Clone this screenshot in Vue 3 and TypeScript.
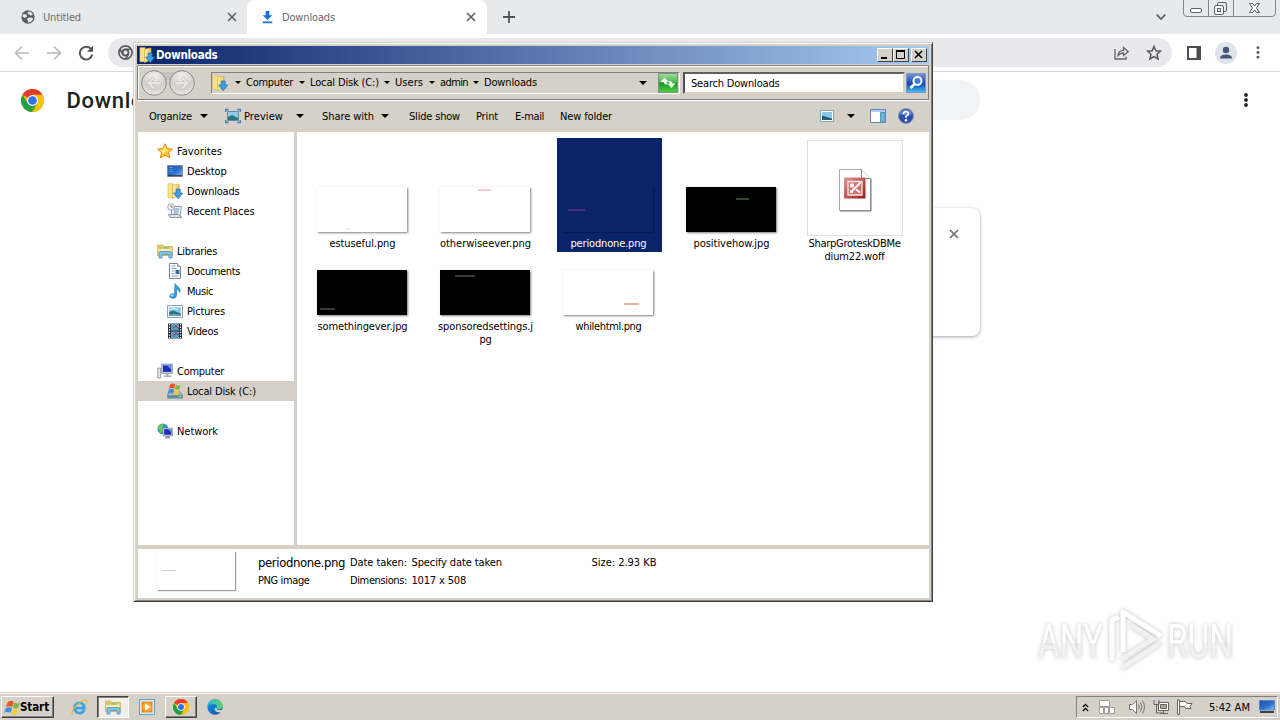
<script setup lang="ts">
interface Row { icon: string; text: string; w: number; child?: boolean; sel?: boolean; gap?: boolean }
interface FileItem { lines: { t: string; w: number }[]; kind: 'light' | 'dark' | 'doc'; mark?: string; sel?: boolean }

/* Spreads letters so that a label occupies the given pixel width. */
const vFit = {
  mounted(el: HTMLElement, binding: { value: number }) {
    const n = (el.textContent || '').trim().length
    const natural = el.getBoundingClientRect().width
    if (n > 0) el.style.letterSpacing = ((binding.value - natural) / n).toFixed(3) + 'px'
  }
}

const crumbs = [
  { text: 'Computer', w: 47, slot: 56 },
  { text: 'Local Disk (C:)', w: 69, slot: 77 },
  { text: 'Users', w: 28, slot: 37 },
  { text: 'admin', w: 28, slot: 36 },
  { text: 'Downloads', w: 53, slot: 0 }
]

const rows: Row[] = [
  { icon: 'star', text: 'Favorites', w: 45 },
  { icon: 'desktop', text: 'Desktop', w: 39.5, child: true },
  { icon: 'dlfolder', text: 'Downloads', w: 52.5, child: true },
  { icon: 'recent', text: 'Recent Places', w: 67.5, child: true },
  { icon: '', text: '', w: 0, gap: true },
  { icon: 'library', text: 'Libraries', w: 40 },
  { icon: 'document', text: 'Documents', w: 53, child: true },
  { icon: 'music', text: 'Music', w: 26, child: true },
  { icon: 'picture', text: 'Pictures', w: 38, child: true },
  { icon: 'video', text: 'Videos', w: 31, child: true },
  { icon: '', text: '', w: 0, gap: true },
  { icon: 'computer', text: 'Computer', w: 47 },
  { icon: 'disk', text: 'Local Disk (C:)', w: 69, child: true, sel: true },
  { icon: '', text: '', w: 0, gap: true },
  { icon: 'network', text: 'Network', w: 41 }
]

const files: FileItem[] = [
  { lines: [{ t: 'estuseful.png', w: 66 }], kind: 'light', mark: 'm1' },
  { lines: [{ t: 'otherwiseever.png', w: 91 }], kind: 'light', mark: 'm2' },
  { lines: [{ t: 'periodnone.png', w: 76 }], kind: 'light', mark: 'm3', sel: true },
  { lines: [{ t: 'positivehow.jpg', w: 76 }], kind: 'dark', mark: 'm4' },
  { lines: [{ t: 'SharpGroteskDBMe', w: 92 }, { t: 'dium22.woff', w: 60 }], kind: 'doc' },
  { lines: [{ t: 'somethingever.jpg', w: 90 }], kind: 'dark', mark: 'm5' },
  { lines: [{ t: 'sponsoredsettings.j', w: 95 }, { t: 'pg', w: 12 }], kind: 'dark', mark: 'm6' },
  { lines: [{ t: 'whilehtml.png', w: 66 }], kind: 'light', mark: 'm7' }
]
</script>

<template>
  <div class="screen">
    <svg class="defs" width="0" height="0">
      <defs>
        <linearGradient id="gFolder" x1="0" x2="1"><stop offset="0" stop-color="#fff3b0" /><stop offset="1" stop-color="#e8c25a" /></linearGradient>
        <linearGradient id="gBlue" x1="0" y1="0" x2="1" y2="1"><stop offset="0" stop-color="#1f4fb0" /><stop offset=".55" stop-color="#2e6fd0" /><stop offset="1" stop-color="#8dbdee" /></linearGradient>
        <linearGradient id="gRed" x1="0" y1="0" x2="1" y2="1"><stop offset="0" stop-color="#dc9a98" /><stop offset="1" stop-color="#9c1717" /></linearGradient>
        <linearGradient id="gEdge" x1="0" y1="0" x2="1" y2="1"><stop offset="0" stop-color="#1b9de2" /><stop offset="1" stop-color="#0c4fa5" /></linearGradient>
        <linearGradient id="gEdge2" x1="0" x2="1"><stop offset="0" stop-color="#2bb3e0" /><stop offset="1" stop-color="#5fd46a" /></linearGradient>
        <radialGradient id="gBall" cx=".5" cy=".25" r=".8"><stop offset="0" stop-color="#f4f2ee" /><stop offset=".6" stop-color="#d2cfc9" /><stop offset="1" stop-color="#f3f1ec" /></radialGradient>
        <linearGradient id="gGo" x1="0" y1="0" x2="0" y2="1"><stop offset="0" stop-color="#a2dc9c" /><stop offset=".45" stop-color="#4fbb4f" /><stop offset=".5" stop-color="#149a1e" /><stop offset="1" stop-color="#52cf4c" /></linearGradient>
        <linearGradient id="gMag" x1="0" y1="0" x2="0" y2="1"><stop offset="0" stop-color="#7796d6" /><stop offset=".45" stop-color="#2353bb" /><stop offset=".55" stop-color="#1646b4" /><stop offset="1" stop-color="#43c4f6" /></linearGradient>
      </defs>
      <symbol id="star" viewBox="0 0 16 16"><path d="M8 .8 10.2 5.6 15.5 6.1 11.5 9.6 12.8 15 8 12.2 3.4 15 4.5 9.7.6 6.1 5.8 5.6Z" fill="#ffc933" stroke="#e58a1c" /><path d="M8 3 9.4 6.5 12 7 9 8 5 12 5.8 9 3 7 6.5 6.5Z" fill="#ffe98a" /></symbol>
      <symbol id="desktop" viewBox="0 0 16 16"><path d="M.5 2.5h15v11H.5z" fill="url(#gBlue)" stroke="#7d8ea8" /><path d="M2 4.5h4M2 6.5h3M2 8.5h4" stroke="#5a90dd" /><path d="M1 12.7h14" stroke="#28303e" /></symbol>
      <symbol id="dlfolder" viewBox="0 0 16 16"><path d="M1 .7h5v14H1z" fill="#f7e287" stroke="#dfc163" stroke-width=".7" /><path d="M5.500 2.2 12 1v11.500L5.500 15.600Z" fill="url(#gFolder)" stroke="#d3ac49" stroke-width=".7" /><path d="M9.200 6h4v4h2.600L11.200 15.700 6.600 10h2.600Z" fill="#3f9fe0" stroke="#1c6bb4" stroke-width=".7" /></symbol>
      <symbol id="recent" viewBox="0 0 16 16"><path d="M5 3.5h9.500l-1.500 10H4z" fill="#f2f5f8" stroke="#8796a8" /><path d="M7 6h5M6.800 8h5M6.500 10h5" stroke="#5d8fc4" /><path d="M1.500 11.500h10l3.500 3H3z" fill="#dce2e8" stroke="#8796a8" /><circle cx="4" cy="4" r="3.300" fill="#f7f9fa" stroke="#9ca6b0" /><path d="M4 2v2h2" fill="none" stroke="#567" stroke-width=".8" /></symbol>
      <symbol id="library" viewBox="0 0 16 16"><path d="M.6 3.500V2h5l1 1.500h8.800v9H.6z" fill="#e9ce67" stroke="#cfae50" stroke-width=".8" /><path d="M1.500 5.500h13v6h-13z" fill="#fbefad" /><path d="M2 5h3M6 5h6" stroke="#6bb978" /><path d="M2.500 8.500h11q1.500 0 1.500 2V15h-3v-3.500H5V15H2V10z" fill="#7fc3e8" stroke="#4a94c7" stroke-width=".8" /></symbol>
      <symbol id="document" viewBox="0 0 16 16"><path d="M2.500.5h8l3 3v12h-11z" fill="#fff" stroke="#71859c" /><path d="M10.500.5v3h3" fill="#d9e4ef" stroke="#71859c" stroke-width=".8" /><path d="M4.500 3h4M4.500 5.500h5M4.500 13h7M4.500 8h3M4.500 10.500h3" stroke="#779bd1" /><path d="M8.500 7h4v4h-4z" fill="#426a9d" /></symbol>
      <symbol id="music" viewBox="0 0 16 16"><path d="M8 .5C10 4 14 4 13 9.500 12 7 10 6.500 9.500 6.200v6.500Q9 15.500 5 15.300 1.500 14.500 3 11.800 5 10 7.500 11Z" fill="#35a0df" stroke="#1a75bb" stroke-width=".6" /><ellipse cx="5" cy="12.500" rx="1.700" ry="1.100" fill="#9bdcff" /></symbol>
      <symbol id="picture" viewBox="0 0 16 16"><path d="M.5 2.500h15v12H.5z" fill="#fff" stroke="#8aa0b4" /><path d="M2.200 4.200h11.600v8.600H2.200z" fill="#83c8ea" /><path d="M2.200 9 6 7.500l7.800 3v2.300H2.200z" fill="#2d6f86" /><path d="M2.200 11.500 8 11l5.800 1v.8H2.200z" fill="#6ab0c4" /><path d="M3 6.500Q7 4 11 6.500" stroke="#eefaff" fill="none" /></symbol>
      <symbol id="video" viewBox="0 0 16 16"><path d="M1 .5h14v15H1z" fill="#22303a" /><path d="M4 1h8v6.500H4zM4 8.500h8V15H4z" fill="#5a9cc4" /><path d="m6 5 3-2 3 3M6 13l3-3 3 2" stroke="#94505a" stroke-width="1.300" fill="none" /><path d="M2.500 1v14M13.500 1v14" stroke="#fff" stroke-width="1.200" stroke-dasharray="1.300 1.300" /></symbol>
      <symbol id="computer" viewBox="0 0 16 16"><path d="M.7 5h2.800v10H.7z" fill="#dfe2e6" stroke="#8a929c" stroke-width=".8" /><path d="M4.500 1h11v9.500h-11z" fill="#b9c2d3" stroke="#7e889b" stroke-width=".6" /><path d="M6 2.400h8.200v6.500H6z" fill="#1c2fb8" /><path d="M10 2.400h4.200v4z" fill="#6d8df0" /><path d="M9 10.500h2.500v2H14v1.600H7v-1.600h2z" fill="#a6afbd" /></symbol>
      <symbol id="disk" viewBox="0 0 16 16"><path d="M2.500 8.500h10l3 3v3.700H.6v-3.700z" fill="#a7b4bd" stroke="#6c7a84" stroke-width=".7" /><path d="M1 12.300h14v2.400H1z" fill="#4d8f9c" /><path d="M12 13.500h2" stroke="#8df16b" /><g transform="translate(.8 0) scale(.75)"><path d="M3 2q4-3 7 0L8.600 7.500q-3-2-7 0z" fill="#e8572a" /><path d="M11 2.500q3 2 6 0L15.400 8q-3 2-6 0z" fill="#7bb93c" /><path d="M1.300 8.800q4-2 7 0L6.800 14q-3-2-7 0z" fill="#3d8fdc" /><path d="M9 9.300q3 2 6 0L13.500 15q-3 2-6 0z" fill="#fac92c" /></g></symbol>
      <symbol id="network" viewBox="0 0 16 16"><circle cx="5.800" cy="5.800" r="5.400" fill="#2f91cf" /><path d="M2 2.500Q5 0 7 1.500L5 5 6.500 7 4 10.500 2.500 7 .6 6z" fill="#6cc464" /><path d="M6 5h9.700v8H6z" fill="#c4ccda" stroke="#7b879b" stroke-width=".6" /><path d="M7.200 6.200h7.200v5.500H7.200z" fill="#1c2fb8" /><path d="M11 6.200h3.400v3.600z" fill="#6d8df0" /><path d="M9 13h4v2.400H8z" fill="#8f99a8" /></symbol>
      <symbol id="chrome" viewBox="0 0 24 24"><circle cx="12" cy="12" r="12" fill="#fbbf12" /><path d="M12 12 1.600 6A12 12 0 0 1 22.400 6z" fill="#e33b2e" /><path d="M1.600 6 7.200 15l4.800 2 0 7A12 12 0 0 1 1.600 6Z" fill="#23a047" /><path d="M12 24 16.500 16 12 16Z" fill="#23a047" /><path d="M17.200 15 12 24A12 12 0 0 0 22.400 6H12z" fill="#fbbf12" /><circle cx="12" cy="12" r="5.700" fill="#fff" /><circle cx="12" cy="12" r="4.500" fill="#2a75e8" /></symbol>
      <symbol id="winflag" viewBox="0 0 18 16"><path d="M4 2q4-3 7 0L9.400 7.500q-3-2-7 0z" fill="#e8572a" /><path d="M11.800 2.500q3 2 6 0L16.200 8q-3 2-6 0z" fill="#7bb93c" /><path d="M2 8.600q4-2 7 0L7.500 14q-3-2-7 0z" fill="#3d8fdc" /><path d="M9.800 9.100q3 2 6 0L14.300 15q-3 2-6 0z" fill="#fac92c" /></symbol>
      <symbol id="cross" viewBox="0 0 10 10"><path d="m1 1 8 8M9 1 1 9" stroke="currentColor" stroke-width="1.700" fill="none" /></symbol>
      <symbol id="caret" viewBox="0 0 8 4"><path d="M0 0h8L4 4z" fill="#000" /></symbol>
    </svg>

    <div class="browser">
      <div class="tabs">
        <div class="tab">
          <svg class="globe" viewBox="0 0 16 16"><circle cx="8" cy="8" r="7.600" fill="#5a5e63" /><path d="M3 4.500 6 5l1 2.500L4.500 9 1.600 7.500Q1.600 6 3 4.500ZM8 2h3l2.600 3L11 6.500 10 5 7.600 4.600ZM8.500 8.800 12 8.500l2 1.200Q12.500 14 8 14.300V12L6.500 10.600Z" fill="#e7eaed" /></svg>
          <span v-fit="38">Untitled</span>
          <svg class="tab-x"><use href="#cross" /></svg>
        </div>
        <div class="tab active">
          <svg class="dl" viewBox="0 0 12 14"><path d="M4 0h4v4.600h3.200L6 9.800.8 4.600H4zM.8 11.400h10.400v1.900H.8z" fill="#1a6fd6" /></svg>
          <span v-fit="53">Downloads</span>
          <svg class="tab-x"><use href="#cross" /></svg>
        </div>
        <svg class="plus" viewBox="0 0 12 12"><path d="M6 0v12M0 6h12" stroke="#4f5357" stroke-width="1.800" /></svg>
        <svg class="chev" viewBox="0 0 10 6"><path d="m.7.7 4.300 4.300L9.300.7" fill="none" stroke="#5a5e63" stroke-width="1.700" /></svg>
        <svg class="winbtns" viewBox="0 0 93 17" fill="none" stroke="#80868b"><path d="M.5 0v13q0 3.500 3.500 3.500h85q3.500 0 3.500-3.500V0M25.500 0v16M50.500 0v16" /><g stroke="#5f646a"><rect x="7.500" y="8.500" width="11" height="4" rx="1.500" fill="#fff" /><path d="M34.500 5V4q0-1.500 1.500-1.500h6q1.500 0 1.500 1.500v6q0 1.500-1.500 1.500h-1" /><rect x="31.500" y="5.500" width="9" height="9" rx="1.500" fill="#f6f7f8" /><rect x="34.500" y="8.500" width="3" height="3" /><path d="M66.500 3.500h3l2 2.500 2-2.500h3L73.500 8l3 4.500h-3l-2-2.500-2 2.500h-3l3-4.500z" fill="#fff" /></g></svg>
      </div>

      <div class="toolbar">
        <svg class="nav" viewBox="0 0 16 16"><path d="M15 8H2M8 1.500 1.500 8 8 14.500" fill="none" stroke="#b9bbbe" stroke-width="1.700" /></svg>
        <svg class="nav" viewBox="0 0 16 16"><path d="M1 8h13M8 1.500 14.500 8 8 14.500" fill="none" stroke="#b9bbbe" stroke-width="1.700" /></svg>
        <svg class="nav" viewBox="0 0 16 16"><path d="M13.300 4.500A6.300 6.300 0 1 0 14.300 9.500" fill="none" stroke="#54585d" stroke-width="2" /><path d="M15 .8v6H9z" fill="#54585d" /></svg>
        <div class="omnibox">
          <svg class="mono" viewBox="0 0 16 16"><circle cx="8" cy="8" r="7" fill="none" stroke="#5a5e63" stroke-width="1.800" /><circle cx="8" cy="8" r="3.200" fill="none" stroke="#5a5e63" stroke-width="2" /><path d="M8 4.500h6.500M5 9.700 1.800 4M11 10 8 15" stroke="#5a5e63" stroke-width="1.800" /></svg>
          <svg class="share" viewBox="0 0 15 14" fill="none" stroke="#62666b" stroke-width="1.300"><path d="M1 3v10h11V10.500" /><path d="M4 9.500Q4.500 4.500 9.500 4.300V1.500L14.200 5.700 9.500 9.500V7Q6.500 6.800 4 9.500Z" /></svg>
          <svg class="fav" viewBox="0 0 16 16"><path d="m8 1.500 1.900 4.300 4.600.4-3.500 3.100 1.100 4.600L8 11.500l-4.100 2.400L5 9.300 1.500 6.200l4.600-.4z" fill="none" stroke="#54585d" stroke-width="1.500" /></svg>
        </div>
        <svg class="side" viewBox="0 0 14 14"><path d="M1 1h12v12H1z" fill="#fff" stroke="#4c5055" stroke-width="2" /><path d="M9.500 1H13v12H9.500z" fill="#4c5055" /></svg>
        <svg class="avatar" viewBox="0 0 22 22"><circle cx="11" cy="11" r="11" fill="#dfe3eb" /><circle cx="11" cy="8" r="3.200" fill="#46547a" /><path d="M5 16.500Q5 12.500 11 12.500t6 4z" fill="#46547a" /></svg>
        <svg class="dots" viewBox="0 0 4 14" fill="#5a5e63"><circle cx="2" cy="2" r="1.600" /><circle cx="2" cy="7" r="1.600" /><circle cx="2" cy="12" r="1.600" /></svg>
      </div>

      <div class="page-head">
        <svg class="logo"><use href="#chrome" /></svg>
        <h1>Downloads</h1>
        <div class="search-pill"></div>
        <svg class="menu-dots" viewBox="0 0 4 14" fill="#202124"><circle cx="2" cy="2" r="1.900" /><circle cx="2" cy="7" r="1.900" /><circle cx="2" cy="12" r="1.900" /></svg>
      </div>
      <div class="dl-card"><svg><use href="#cross" /></svg></div>
    </div>

    <div class="window">
      <div class="titlebar">
        <svg class="i16"><use href="#dlfolder" /></svg>
        <b v-fit="61.5">Downloads</b>
        <div class="tbtns">
          <i><svg viewBox="0 0 14 12"><path d="M3 9h6" stroke="#000" stroke-width="2" /></svg></i>
          <i><svg viewBox="0 0 14 12"><path d="M2.500 2h8v7.500h-8z" fill="none" stroke="#000" /><path d="M2 2h9" stroke="#000" stroke-width="2" /></svg></i>
          <i class="gapl"><svg viewBox="0 0 14 12"><path d="m3 2 7 7M10 2 3 9" stroke="#000" stroke-width="1.600" /></svg></i>
        </div>
      </div>

      <div class="navbar">
        <svg class="balls" viewBox="0 0 56 28"><path d="M10 3h36v10q-18-4-36 0z" fill="#c5c2bc" /><g stroke="#8f8c87"><circle cx="14" cy="14" r="12.300" fill="url(#gBall)" /><circle cx="42" cy="14" r="12.300" fill="url(#gBall)" /></g><g fill="none" stroke="#c3c0ba" stroke-width="3.200"><path d="M20 14H9M14 8.500 8.500 14l5.500 5.500M36 14h11M42 8.500 47.500 14 42 19.500" /></g><g fill="none" stroke="#e9e7e3" stroke-width="1.900"><path d="M20 14H9M14 8.500 8.500 14l5.500 5.500M36 14h11M42 8.500 47.500 14 42 19.500" /></g></svg>
        <div class="address">
          <svg class="i16"><use href="#dlfolder" /></svg>
          <svg class="tri first" viewBox="0 0 8 4"><path d="M1 0h6L4 3z" /></svg>
          <div v-for="(c, i) in crumbs" :key="c.text" class="crumb" :style="{ width: (c.slot + 8) + 'px' }">
            <span v-fit="c.w">{{ c.text }}</span>
            <svg v-if="i < crumbs.length - 1" class="tri" viewBox="0 0 8 4"><path d="M1 0h6L4 3z" /></svg>
          </div>
          <svg class="caret"><use href="#caret" /></svg>
          <svg class="go" viewBox="0 0 20 20"><path d="M.5.5h19v19H.5z" fill="url(#gGo)" stroke="#7b927c" /><path d="M2.500 9 6.500 4.500 10.500 9H8.300q.5 2 2.500 2.500-4.500.5-5.300-2.500zM17.500 10.500 13.500 15 9.500 10.500h2.300Q11.500 8.500 9.500 8q4.300-.5 5.300 2.500z" fill="#fff" /></svg>
        </div>
        <div class="search"><span v-fit="88.5">Search Downloads</span></div>
        <svg class="mag" viewBox="0 0 20 20"><path d="M.5.5h19v19H.5z" fill="url(#gMag)" stroke="#7f96bb" /><circle cx="11.500" cy="8" r="4" fill="#3f7fd8" stroke="#fff" stroke-width="2" /><path d="M8.500 11 4.500 15" stroke="#fff" stroke-width="2.600" /></svg>
      </div>

      <div class="commands">
        <span v-fit="43">Organize</span><svg class="caret c1"><use href="#caret" /></svg>
        <svg class="pv" viewBox="0 0 16 16"><path d="M2.500 3.500h11v9h-11z" fill="#8ecbe9" stroke="#6b86a0" /><path d="M3 9l4-2 6 3v2H3z" fill="#2d7483" /><path d="M.7 4V1.500h3M12.300 1.500h3V4M15.300 12v2.500h-3M3.700 14.500h-3V12" fill="none" stroke="#3f7cc4" stroke-width="1.300" /></svg>
        <span v-fit="39">Preview</span><svg class="caret c2"><use href="#caret" /></svg>
        <span class="s3" v-fit="52">Share with</span><svg class="caret c3"><use href="#caret" /></svg>
        <span class="s4" v-fit="51">Slide show</span>
        <span class="s5" v-fit="22">Print</span>
        <span class="s6" v-fit="29">E-mail</span>
        <span class="s7" v-fit="52">New folder</span>
        <div class="cmdright">
          <svg class="view" viewBox="0 0 14 12"><path d="M.5.500h13v11H.5z" fill="#fff" stroke="#87a0b5" /><path d="M2 2h10v8H2z" fill="#8ac5ea" /><path d="m2 5.500 10 3V10H2z" fill="#275f75" /></svg>
          <svg class="caret"><use href="#caret" /></svg>
          <svg class="pane" viewBox="0 0 16 14"><path d="M.5.500h15v13H.5z" fill="#fff" stroke="#6389b8" /><path d="M1 1h14v2H1z" fill="#b5cee9" /><path d="M10.500 3.500h4.500V13h-4.500z" fill="#66b9d9" stroke="#5e92b4" /></svg>
          <svg class="help" viewBox="0 0 16 16"><circle cx="8" cy="8" r="7.500" fill="#2b4fb0" stroke="#8994ad" /><path d="M2 6Q3 1.500 8 1.500T14 6Q8 9 2 6" fill="#5f83d6" /><path d="M5.500 6Q5.700 3.700 8 3.700t2.400 2Q10.400 7 8 8.300v1.500" fill="none" stroke="#fff" stroke-width="1.700" /><circle cx="8" cy="12.200" r="1.200" fill="#fff" /></svg>
        </div>
      </div>

      <div class="body">
        <div class="sidebar">
          <div v-for="(r, i) in rows" :key="i" class="row" :class="{ child: r.child, sel: r.sel }">
            <svg v-if="!r.gap" class="i16"><use :href="'#' + r.icon" /></svg>
            <span v-if="!r.gap" v-fit="r.w">{{ r.text }}</span>
          </div>
        </div>
        <div class="files">
          <div v-for="f in files" :key="f.lines[0].t" class="file" :class="{ sel: f.sel }">
            <div class="thumbbox" :class="{ doc: f.kind === 'doc' }">
              <div v-if="f.kind !== 'doc'" class="thumb" :class="f.kind"><i class="mark" :class="f.mark"></i></div>
              <svg v-else class="woff" viewBox="0 0 33 43"><path d="M.5.500h22l9 9v32H.5z" fill="#fdfdfd" stroke="#aaa" /><path d="M1 42h31V9.500" fill="none" stroke="#777" /><path d="M22.500.5v9h9" fill="#fff" stroke="#888" /><path d="M5 8.500h21.500v21H5z" fill="url(#gRed)" /><path d="M9 12.500h14v13.500H9z" fill="#cf7371" stroke="#f8e6e4" stroke-width="1.300" /><path d="m13.500 21.500 8-8M17 20.500l4 3" fill="none" stroke="#fff" stroke-width="1.900" /><path d="M11 14.500h4v4h-4zM11 21h3v3h-3z" fill="#fbeeee" /></svg>
            </div>
            <div v-for="l in f.lines" :key="l.t" class="name"><span v-fit="l.w">{{ l.t }}</span></div>
          </div>
        </div>
      </div>

      <div class="details">
        <div class="dthumb"><i></i></div>
        <div class="dcol a"><span class="big" v-fit="87">periodnone.png</span><span v-fit="51.5">PNG image</span></div>
        <div class="dcol b"><span v-fit="57">Date taken:</span><span v-fit="57">Dimensions:</span></div>
        <div class="dcol c"><span v-fit="90.5">Specify date taken</span><span v-fit="54.5">1017 x 508</span></div>
        <div class="dcol"><span v-fit="65">Size: 2.93 KB</span></div>
      </div>
    </div>

    <svg class="watermark" viewBox="0 0 210 80">
      <defs>
        <linearGradient id="gW" x1="0" y1="0" x2="0" y2="1"><stop offset=".52" stop-color="#fff" /><stop offset=".53" stop-color="#f1f1f1" /></linearGradient>
      </defs>
      <g fill="url(#gW)">
        <text x="8" y="58" textLength="65" lengthAdjust="spacingAndGlyphs">ANY</text>
        <text x="137" y="58" textLength="66" lengthAdjust="spacingAndGlyphs">RUN</text>
      </g>
      <g fill="none" stroke="#fff" stroke-width="5" stroke-linejoin="round">
        <path d="M82 61V20l7-3" /><path d="M92 68l38-25M92 59l31-20-22-14" stroke="#f1f1f1" /><path d="M93 52V12l38 24" />
      </g>
    </svg>

    <div class="taskbar">
      <div class="start"><svg><use href="#winflag" /></svg><b v-fit="29">Start</b></div>
      <svg class="ie" viewBox="0 0 18 18"><path d="M14 11.500Q12.500 15 9 15 4 14.500 3.700 9.500 4 4.500 9 4q5 .5 5.200 5.700H5" fill="none" stroke="#36a5e5" stroke-width="2.800" /><path d="M2 16Q-1 14 5 7.500 13-.5 16.500 1.500 18 3 15.500 6" fill="none" stroke="#e9b93c" stroke-width="1.300" /></svg>
      <div class="tb pressed"><svg><use href="#library" /></svg></div>
      <svg class="wmp" viewBox="0 0 16 16"><path d="M.5.500h15v15H.5z" fill="#d7eefb" stroke="#57a2cf" /><path d="M2.500 2.500h11v11h-11z" fill="#f28a19" /><circle cx="8" cy="8" r="4.600" fill="#f7a640" /><path d="M6 4.500 11.500 8 6 11.500z" fill="#fff" /></svg>
      <div class="tb raised"><svg><use href="#chrome" /></svg></div>
      <svg class="edge" viewBox="0 0 16 16"><circle cx="8" cy="8" r="7.700" fill="url(#gEdge)" /><path d="M.4 7Q1.500.5 8 .3q7 .2 7.600 6.500.2 3.700-4.200 3.700-2 0-1.700-1.500Q10.500 5 6.500 5 2 5 .4 7Z" fill="url(#gEdge2)" /><path d="M9.700 8.500Q9 11 12 11.300l3-.5 1 .5-1.500 2Q9 14 7.500 10.500 7.500 8.500 9.700 8.500Z" fill="#d5d0c8" /></svg>
      <div class="tray">
        <svg class="up" viewBox="0 0 8 10"><path d="m1 4.500 3-3 3 3M1 9l3-3 3 3" fill="none" stroke="#000" stroke-width="1.500" /></svg>
        <svg class="t1" viewBox="0 0 16 16" fill="#fff" stroke="#8b8883" stroke-width=".8"><path d="M.5 1.500h10v6H.5zM.5 8.500h4v6h-4zM5.500 8.500h4v6h-4zM10.500 8.500h5v6h-5z" /></svg>
        <svg class="t2" viewBox="0 0 16 16" fill="none" stroke="#77746f"><path d="M.5 5.500h3l4-4v13l-4-4h-3z" fill="#fff" /><path d="M9.500 5.500q1.500 2.500 0 5M11.500 3.500q3 4.500 0 9M13.500 1.500q4 6.500 0 13" /></svg>
        <svg class="t3" viewBox="0 0 16 16" fill="#fff" stroke="#66635f"><path d="M5.500 3.500h10v8h-10z" /><path d="M7.500 5.500h6v4h-6z" fill="#aaa7a1" /><path d="M1 1v4.500h5V1M3.500 5.500v8.500h6M7 14.500h8M10.500 12v2" fill="none" /></svg>
        <svg class="t4" viewBox="0 0 16 16" fill="#fff" stroke="#66635f"><path d="M.5 1h2v14.500h-2zM2.500 2.500h6l1.500 2h5l-2 3 1 2H8.500l-1-2h-5z" /></svg>
        <span v-fit="41">5:42 AM</span>
        <svg class="t5" viewBox="0 0 16 14"><path d="M.5.500h15v9.500H.5z" fill="url(#gBlue)" stroke="#5d86c0" /><path d="M1 11h14v2H1z" fill="#39424f" /></svg>
      </div>
    </div>
  </div>
</template>

<style>
html, body { margin: 0; overflow: hidden; }
</style>

<style scoped>
* { box-sizing: border-box; }
.screen { position: relative; width: 1280px; height: 720px; overflow: hidden; background: #fff; font: 11px/13px "DejaVu Sans Condensed", "DejaVu Sans", "Liberation Sans", sans-serif; color: #000; white-space: nowrap; }
.screen svg { display: block; flex: none; }
.screen span, .screen b { flex: none; }
.screen b { font-size: 11.5px; }
.defs { position: absolute; }
.i16 { width: 16px; height: 16px; }
.browser { height: 693px; display: flex; flex-direction: column; }
.tabs { height: 34px; background: #e7eaed; display: flex; align-items: center; flex: none; }
.tab { width: 247px; height: 34px; display: flex; align-items: center; padding: 0 10px 0 21px; color: #686c70; }
.tab.active { width: 240px; background: #fff; border-radius: 8px 8px 0 0; padding: 0 11px 0 15px; color: #65696d; }
.globe { width: 14px; height: 14px; margin-right: 8px; }
.dl { width: 11px; height: 13px; margin-right: 9px; }
.tab-x { width: 10px; height: 10px; margin-left: auto; color: #5f6368; }
.plus { width: 12px; height: 12px; margin-left: 16px; }
.chev { width: 10px; height: 6px; margin-left: 641px; }
.winbtns { width: 93px; height: 17px; margin-left: 17px; align-self: flex-start; }
.toolbar { height: 38px; flex: none; display: flex; align-items: center; border-bottom: 1px solid #d9dadc; padding-left: 14px; }
.nav { width: 16px; height: 16px; margin-right: 16px; }
.omnibox { width: 1064px; height: 29px; border-radius: 15px; background: #e9e9ed; margin-left: -2px; display: flex; align-items: center; padding: 0 10px; }
.mono { width: 15px; height: 15px; }
.share { width: 15px; height: 14px; margin-left: auto; }
.fav { width: 16px; height: 16px; margin-left: 17px; }
.side { width: 14px; height: 14px; margin-left: 15px; }
.avatar { width: 22px; height: 22px; margin-left: 14px; }
.dots { width: 4px; height: 13px; margin-left: 19px; }
.page-head { height: 56px; flex: none; display: flex; align-items: center; padding-left: 21px; }
h1 { margin: 1px 0 0 22.5px; width: 129.5px; font: 500 22px/26px Roboto, sans-serif; letter-spacing: .7px; color: #202124; }
.logo { width: 23px; height: 23px; }
.search-pill { width: 680px; height: 40px; border-radius: 20px; background: #f1f3f4; margin-left: 104px; }
.menu-dots { width: 4px; height: 14px; margin-left: 264px; }
.dl-card { width: 680px; height: 128px; margin: 80px 0 0 300px; border-radius: 8px; box-shadow: 0 1px 3px rgba(60,64,67,.35), 0 1px 5px rgba(60,64,67,.15); display: flex; justify-content: flex-end; padding: 21px 21px; color: #6a6e73; }
.dl-card svg { width: 10px; height: 10px; }

.window { position: absolute; left: 133px; top: 42px; width: 800px; height: 560px; background: #d5d0c8; border: 1px solid; border-color: #d5d0c8 #404040 #404040 #d5d0c8; box-shadow: inset 1px 1px #fff, inset -1px -1px #808080; padding: 3px; display: flex; flex-direction: column; }
.titlebar { height: 18px; flex: none; background: linear-gradient(90deg, #0a246a, #a6caf0); display: flex; align-items: center; color: #fff; padding: 0 2px; }
.titlebar b { margin-left: 1px; }
.tbtns { margin-left: auto; display: flex; }
.tbtns i { width: 16px; height: 14px; background: #d5d0c8; border: 1px solid; border-color: #fff #404040 #404040 #fff; }
.tbtns i svg { width: 14px; height: 12px; }
.tbtns .gapl { margin-left: 2px; }
.navbar { height: 35px; margin-top: 1px; flex: none; border: 1px solid #808080; box-shadow: inset 1px 1px #fff, 0 1px #fff; display: flex; align-items: center; padding: 0 1px 0 2px; }
.balls { width: 56px; height: 28px; }
.address { width: 469px; height: 22px; margin-left: 15px; border: 1px solid; border-color: #808080 #fff #fff #808080; display: flex; align-items: center; }
.tri { width: 8px; height: 4px; }
.tri.first { margin: 0 4px 0 6px; }
.crumb { display: flex; justify-content: space-between; align-items: center; flex: none; padding-right: 4px; }
.caret { width: 8px; height: 4px; }
.address > .caret { margin-left: auto; margin-right: 11px; }
.go { width: 20px; height: 20px; margin-right: 1px; }
.search { width: 222px; height: 22px; margin-left: 3px; background: #fff; border: 2px solid; border-color: #606060 #d5d0c8 #d5d0c8 #505050; padding: 3px 0 0 6px; }
.mag { width: 20px; height: 20px; margin-left: 1px; }
.commands { height: 32px; flex: none; display: flex; align-items: center; padding-left: 12px; }
.commands span { margin-right: 1px; }
.c1 { margin-left: 7px; }
.pv { width: 16px; height: 16px; margin: 0 3px 0 17px; }
.c2 { margin-left: 12px; }
.s3 { margin-left: 18px; }
.c3 { margin-left: 6px; }
.s4 { margin-left: 20px; }
.s5 { margin-left: 15px; }
.s6 { margin-left: 16px; }
.s7 { margin-left: 15px; }
.cmdright { margin-left: auto; display: flex; align-items: center; padding-right: 15px; }
.view { width: 14px; height: 12px; margin-right: 13px; }
.pane { width: 16px; height: 14px; margin: 0 12px 0 15px; }
.help { width: 16px; height: 16px; }
.body { height: 413px; flex: none; display: flex; background: #fff; margin-left: 1px; }
.sidebar { width: 159px; border-right: 3px solid #d5d0c8; padding-top: 9px; }
.row { height: 20px; display: flex; align-items: center; padding-left: 19px; gap: 4px; }
.row.child { padding-left: 29px; }
.row.sel { background: #d5cfc7; }
.files { display: grid; grid-template-columns: repeat(5, 105px); grid-template-rows: 83px; column-gap: 18px; align-content: start; padding: 6px 0 0 14px; }
.file { width: 105px; height: 114px; padding: 2px 2px 0 0; }
.file.sel { background: #0a246a; color: #fff; }
.thumbbox { width: 96px; height: 96px; margin-left: 4px; display: flex; justify-content: flex-start; align-items: flex-end; padding: 0 0 4px 2px; }
.thumbbox.doc { border: 1px solid #dce0e3; justify-content: center; align-items: center; padding: 4px 0 0; }
.thumb { width: 90px; height: 45px; background: #fff; box-shadow: 1px 1px 2px rgba(0,0,0,.5); display: flex; }
.thumb.dark { background: #000; }
.sel .thumb { background: transparent; box-shadow: 1px 1px 1px #071a50; }
.mark { height: 2px; opacity: .45; background: currentColor; }
.m1 { width: 6px; margin: 41px 0 0 28px; color: #ddd; }
.m2 { width: 13px; margin: 2px 0 0 38px; color: #e8909a; }
.m3 { width: 17px; margin: 22px 0 0 5px; color: #a63395; }
.m4 { width: 13px; margin: 11px 0 0 50px; color: #61a574; }
.m5 { width: 15px; margin: 38px 0 0 3px; color: #777; }
.m6 { width: 20px; margin: 5px 0 0 15px; color: #777; }
.m7 { width: 15px; margin: 33px 0 0 61px; color: #e34c5c; }
.woff { width: 33px; height: 43px; }
.name { height: 13px; display: flex; justify-content: center; position: relative; top: 1px; }
.details { height: 53px; flex: none; border-top: 4px solid #d5cfc7; background: #fff; margin-left: 1px; display: flex; padding: 2px 0 0 19px; }
.dthumb { width: 78px; height: 39px; box-shadow: 1px 1px 1px #999, 0 0 1px #ddd; margin-right: 23px; }
.dthumb i { display: block; width: 14px; height: 1px; background: #ccc; margin: 19px 0 0 5px; }
.dcol { display: flex; flex-direction: column; align-items: flex-start; padding-top: 5px; gap: 5px; }
.dcol.a { width: 92px; }
.dcol.b { width: 61.500px; }
.dcol.c { width: 180px; }
.big { font-size: 13px; }
.watermark { position: absolute; left: 1030px; top: 600px; width: 210px; height: 80px; overflow: visible; font: 400 49px Roboto, sans-serif; filter: drop-shadow(0 0 2px rgba(0,0,0,.24)); }

.taskbar { height: 27px; background: #d5d0c8; border-top: 1px solid #fff; box-shadow: 0 -1px #d5d0c8; display: flex; align-items: center; position: relative; }
.start { width: 53px; height: 22px; margin-left: 1px; border: 1px solid; border-color: #fff #404040 #404040 #fff; box-shadow: inset -1px -1px #808080; display: flex; align-items: center; padding-left: 2px; }
.start svg { width: 16px; height: 15px; }
.ie { width: 17px; height: 17px; margin-left: 17px; }
.tb { height: 22px; border: 1px solid; display: flex; align-items: center; justify-content: center; }
.tb svg { width: 16px; height: 16px; }
.pressed { width: 32px; margin-left: 9px; background: #f0eeea; border-color: #404040 #fff #fff #404040; box-shadow: inset 1px 1px #808080; }
.wmp { width: 16px; height: 16px; margin-left: 10px; }
.raised { width: 32px; margin-left: 10px; border-color: #fff #404040 #404040 #fff; box-shadow: inset -1px -1px #808080; }
.edge { width: 16px; height: 16px; margin-left: 10px; }
.tray { width: 202px; height: 22px; margin: 0 2px 0 auto; border: 1px solid; border-color: #808080 #fff #fff #808080; display: flex; align-items: center; padding-left: 5px; }
.up { width: 7px; height: 9px; }
.t1, .t2, .t3, .t4 { width: 16px; height: 16px; }
.t1 { margin-left: 10px; }
.t2 { margin-left: 14px; }
.t3 { margin-left: 8px; }
.t4 { margin-left: 8px; }
.tray span { margin-left: 16px; }
.t5 { width: 16px; height: 14px; margin-left: 9px; }
</style>
